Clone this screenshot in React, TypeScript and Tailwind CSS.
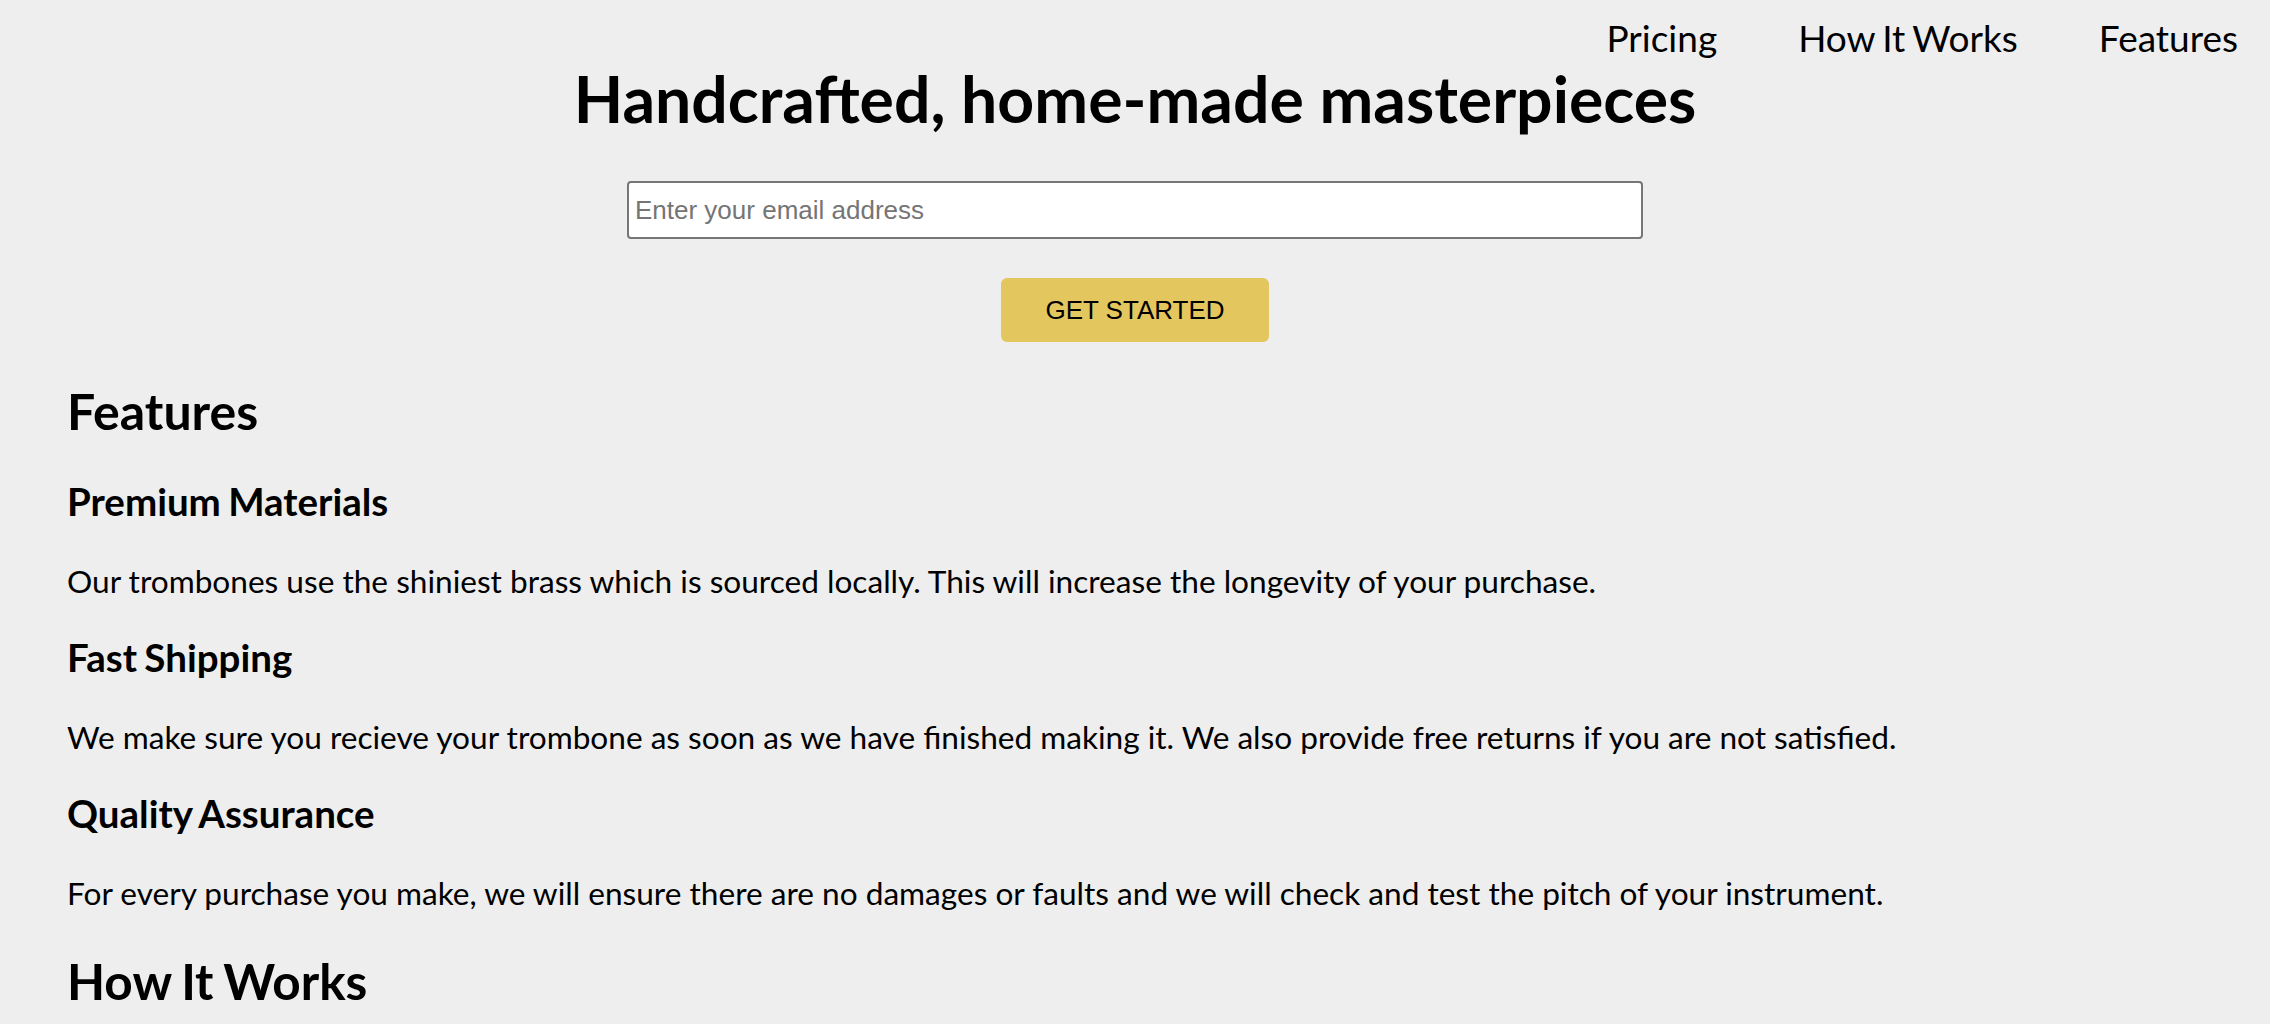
const NAV_LINKS = ["Pricing", "How It Works", "Features"];

const FEATURES = [
  {
    title: "Premium Materials",
    text: "Our trombones use the shiniest brass which is sourced locally. This will increase the longevity of your purchase.",
  },
  {
    title: "Fast Shipping",
    text: "We make sure you recieve your trombone as soon as we have finished making it. We also provide free returns if you are not satisfied.",
  },
  {
    title: "Quality Assurance",
    text: "For every purchase you make, we will ensure there are no damages or faults and we will check and test the pitch of your instrument.",
  },
];

export default function App() {
  return (
    <div className="min-h-screen bg-[#eeeeee] font-['Lato','Noto_Sans',sans-serif] text-black">
      <header className="flex justify-end gap-[81px] pr-[32px] pt-[16px]">
        {NAV_LINKS.map((label) => (
          <a key={label} href="#" className="text-[37px] leading-[44px] [word-spacing:-2px]">
            {label}
          </a>
        ))}
      </header>

      <section className="flex flex-col items-center">
        <h1 className="text-[64.3px] font-bold leading-[77px]">
          Handcrafted, home-made masterpieces
        </h1>
        <input
          type="email"
          placeholder="Enter your email address"
          className="mt-[44px] h-[58px] w-[1016px] rounded-[4px] border-2 border-[#767676] bg-white px-[6px] font-['Liberation_Sans',Arial,sans-serif] text-[26px] placeholder:text-[#757575]"
        />
        <button className="mt-[39px] h-[64px] w-[268px] rounded-[6px] bg-[#e4c65e] font-['Liberation_Sans',Arial,sans-serif] text-[26px] text-black">
          GET STARTED
        </button>
      </section>

      <main className="px-[67px]">
        <h2 className="mt-[39px] text-[50px] font-bold leading-[60px]">Features</h2>
        <div className="mt-[37px] flex flex-col gap-[34px]">
          {FEATURES.map((f) => (
            <div key={f.title} className="flex flex-col gap-[38px]">
              <h3 className="text-[38.5px] font-bold leading-[47px] [word-spacing:-2px]">{f.title}</h3>
              <p className="text-[31.6px] leading-[37px]">{f.text}</p>
            </div>
          ))}
        </div>
        <h2 className="mt-[39px] text-[49.5px] font-bold leading-[60px] [word-spacing:-2px]">
          How It Works
        </h2>
      </main>
    </div>
  );
}
